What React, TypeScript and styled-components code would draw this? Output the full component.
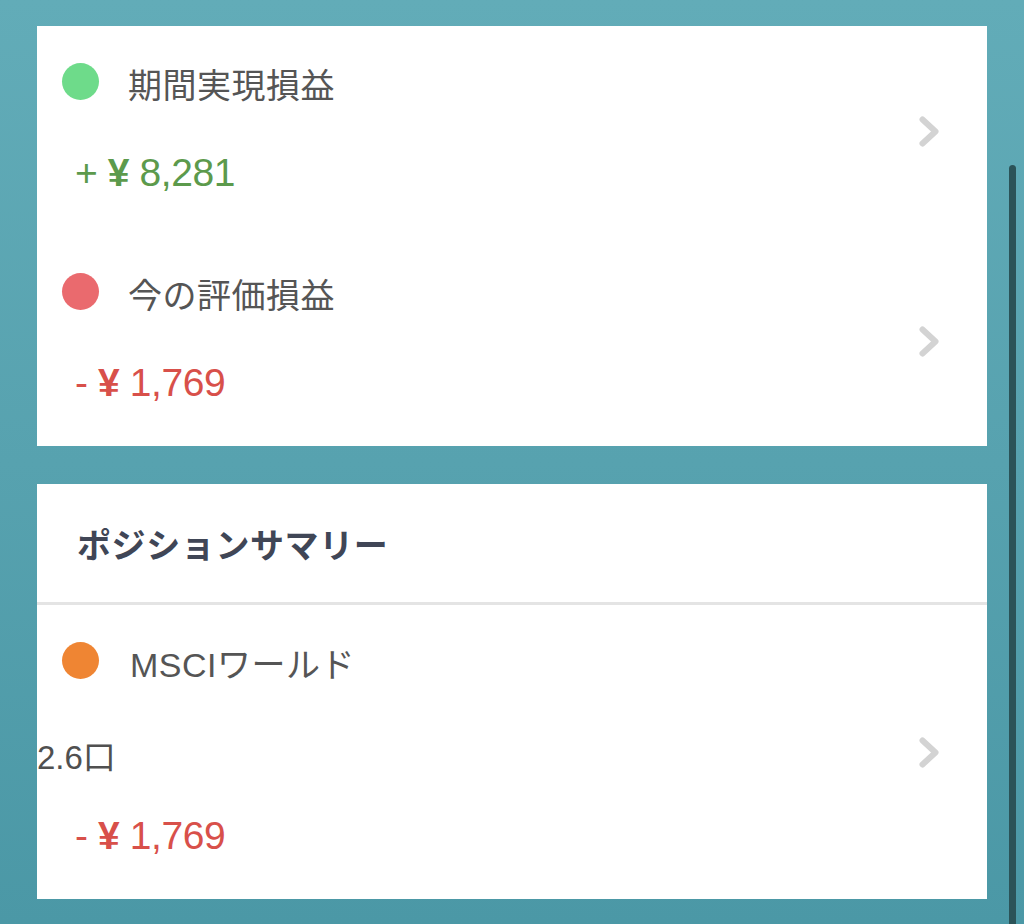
import React from "react";
import styled, { createGlobalStyle } from "styled-components";

const GlobalStyle = createGlobalStyle`
  html, body {
    margin: 0;
    padding: 0;
  }
  body {
    background: linear-gradient(180deg, #62acb8 0%, #57a2af 50%, #4b98a6 100%);
    font-family: "Liberation Sans", "Noto Sans CJK JP", sans-serif;
  }
`;

const Page = styled.div`
  position: relative;
  box-sizing: border-box;
  width: 1024px;
  height: 924px;
  padding: 26px 37px 25px;
  display: flex;
  flex-direction: column;
  gap: 38px;
  overflow: hidden;
`;

const Card = styled.section`
  background: #ffffff;
  display: flex;
  flex-direction: column;
`;

const Row = styled.div<{ $height: number }>`
  height: ${(p) => p.$height}px;
  display: grid;
  grid-template-columns: 1fr auto;
  padding-right: 48px;
`;

const Content = styled.div`
  display: flex;
  flex-direction: column;
  align-items: flex-start;
`;

const TitleLine = styled.div`
  display: flex;
  align-items: flex-start;
  margin: 37px 0 0 25px;
  gap: 29px;
`;

const Dot = styled.span<{ $color: string }>`
  width: 37px;
  height: 37px;
  border-radius: 50%;
  background: ${(p) => p.$color};
  flex: none;
`;

const Label = styled.span<{ $shift?: number }>`
  font-size: 34px;
  line-height: 37px;
  color: #555555;
  margin-top: 5px;
  margin-left: ${(p) => p.$shift ?? 0}px;
  letter-spacing: 0.5px;
`;

const Amount = styled.div<{ $tone: "gain" | "loss"; $gap: number }>`
  font-size: 39px;
  line-height: 39px;
  margin: ${(p) => p.$gap}px 0 0 38px;
  color: ${(p) => (p.$tone === "gain" ? "#5c9a4c" : "#d8504a")};
  white-space: pre;
  letter-spacing: -0.4px;
`;

const Yen = styled.span`
  font-weight: 700;
`;

const Quantity = styled.div`
  font-size: 33px;
  line-height: 33px;
  color: #505050;
  margin-top: 57px;
`;

const ChevronBox = styled.div`
  align-self: center;
  width: 20px;
  height: 31px;
  display: flex;
`;

const Header = styled.div`
  height: 118px;
  display: flex;
  align-items: center;
  padding-left: 40px;
  font-size: 34px;
  font-weight: 700;
  letter-spacing: 0.6px;
  color: #404656;
  font-family: "Noto Sans CJK JP", sans-serif;
`;

const Divider = styled.div`
  height: 3px;
  background: #e4e4e4;
`;

const ScrollThumb = styled.div`
  position: absolute;
  left: 1009px;
  top: 165px;
  width: 7px;
  height: 780px;
  border-radius: 4px;
  background: #2b5358;
`;

const Chevron = () => (
  <ChevronBox>
    <svg width="20" height="31" viewBox="0 0 20 31">
      <polyline
        points="3.5,3.5 16.5,15.5 3.5,27.5"
        fill="none"
        stroke="#d3d3d3"
        strokeWidth="6"
        strokeLinecap="round"
        strokeLinejoin="round"
      />
    </svg>
  </ChevronBox>
);

const MoneyValue = ({ sign, value, tone, gap }: { sign: string; value: string; tone: "gain" | "loss"; gap: number }) => (
  <Amount $tone={tone} $gap={gap}>
    {sign} <Yen>¥</Yen> {value}
  </Amount>
);

export default function App() {
  return (
    <>
      <GlobalStyle />
      <Page>
        <Card>
          <Row $height={210}>
            <Content>
              <TitleLine>
                <Dot $color="#6edb8a" />
                <Label>期間実現損益</Label>
              </TitleLine>
              <MoneyValue sign="+" value="8,281" tone="gain" gap={48} />
            </Content>
            <Chevron />
          </Row>
          <Row $height={210}>
            <Content>
              <TitleLine>
                <Dot $color="#ea6a6e" />
                <Label>今の評価損益</Label>
              </TitleLine>
              <MoneyValue sign="-" value="1,769" tone="loss" gap={48} />
            </Content>
            <Chevron />
          </Row>
        </Card>
        <Card>
          <Header>ポジションサマリー</Header>
          <Divider />
          <Row $height={294}>
            <Content>
              <TitleLine>
                <Dot $color="#ef8533" />
                <Label $shift={2}>MSCIワールド</Label>
              </TitleLine>
              <Quantity>2.6口</Quantity>
              <MoneyValue sign="-" value="1,769" tone="loss" gap={42} />
            </Content>
            <Chevron />
          </Row>
        </Card>
        <ScrollThumb />
      </Page>
    </>
  );
}
